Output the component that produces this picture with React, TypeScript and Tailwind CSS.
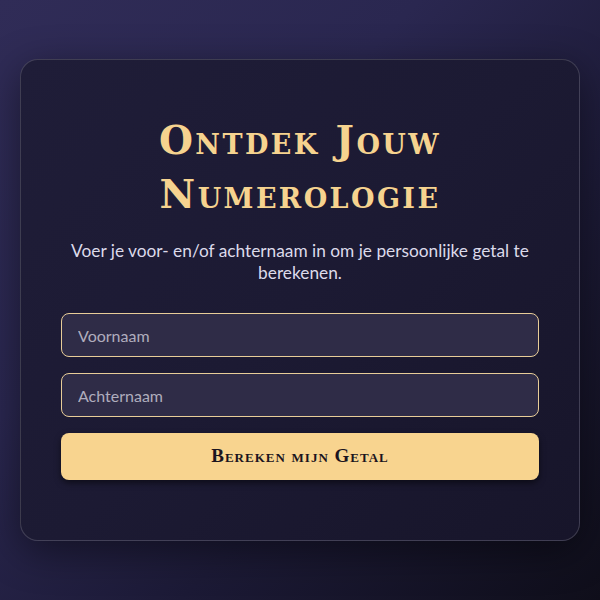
import React from "react";

export default function App() {
  return (
    <div className="w-[600px] h-[600px] flex items-center justify-center bg-[linear-gradient(135deg,#302c57_0%,#2a2750_35%,#1c1a36_65%,#0f0e1a_100%)] font-['Lato','Noto_Sans',sans-serif]">
      <div className="w-[560px] h-[482px] rounded-[18px] border border-[rgba(255,255,255,0.16)] bg-[linear-gradient(135deg,#1f1d38_0%,#1c1a33_50%,#17152a_100%)] shadow-[0_10px_40px_rgba(0,0,0,0.45)] px-10 pt-[53px] flex flex-col items-center">
        <h1 className="text-[39px] leading-[54px] font-bold text-[#f6d38f] text-center tracking-[2.4px] [font-variant:small-caps] font-['DejaVu_Serif','Liberation_Serif',serif]">
          Ontdek Jouw
          <br />
          Numerologie
        </h1>
        <p className="mt-[19px] text-[17.3px] leading-[22px] text-[#dcdaea] text-center">
          Voer je voor- en/of achternaam in om je persoonlijke getal te berekenen.
        </p>
        <div className="mt-[29px] w-full flex flex-col gap-4">
          <input
            placeholder="Voornaam"
            className="w-full h-[44px] rounded-lg border border-[#e8cd98] bg-[#2f2c47] px-4 text-[16px] text-white placeholder:text-[#b0adbd] outline-none"
          />
          <input
            placeholder="Achternaam"
            className="w-full h-[44px] rounded-lg border border-[#e8cd98] bg-[#2f2c47] px-4 text-[16px] text-white placeholder:text-[#b0adbd] outline-none"
          />
          <button className="w-full h-[47px] rounded-lg bg-[#f8d48f] text-[#1b1420] text-[19px] font-bold tracking-[1px] [font-variant:small-caps] font-['Liberation_Serif','DejaVu_Serif',serif] shadow-[0_3px_6px_rgba(0,0,0,0.5)]">
            Bereken mijn Getal
          </button>
        </div>
      </div>
    </div>
  );
}
